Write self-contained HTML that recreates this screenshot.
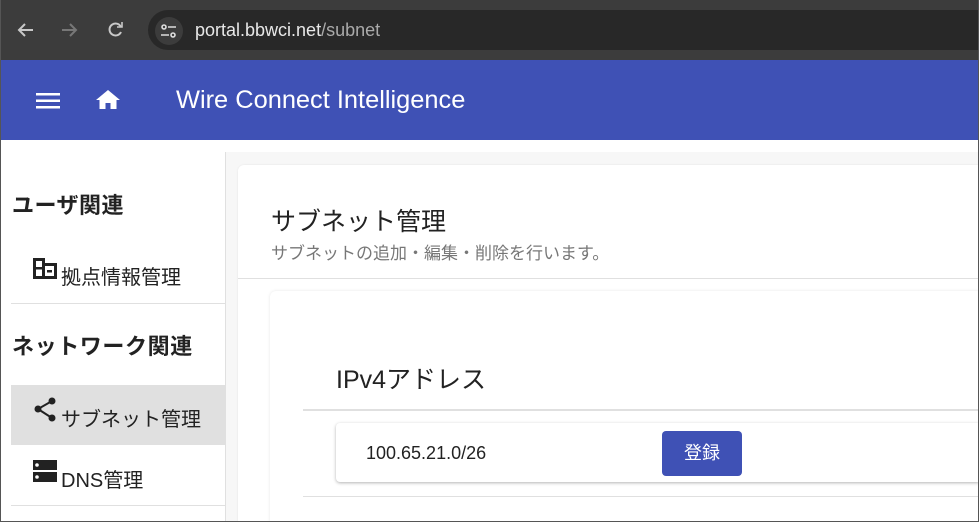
<!DOCTYPE html>
<html style="width:979px;height:522px;overflow:hidden"><head><meta charset="utf-8"><style>
*{margin:0;padding:0;box-sizing:border-box}
body{width:979px;height:522px;overflow:hidden;font-family:"Liberation Sans","Noto Sans CJK JP",sans-serif;background:#fff;position:relative;color:#222}
.abs{position:absolute}
</style></head><body>
<div class="abs" style="left:0;top:0;width:979px;height:60px;background:#3c3c3c"></div>
<div class="abs" style="left:148px;top:10px;width:831px;height:40px;border-radius:20px 0 0 20px;background:#282828"></div>
<div class="abs" style="left:155px;top:17px;width:28px;height:28px;border-radius:14px;background:#3c3c3c"></div>
<svg class="abs" style="left:0;top:0" width="200" height="60">
<g stroke="#c8c8c8" stroke-width="2" fill="none"><path d="M33 30H19M25 24l-6 6 6 6"/></g>
<g stroke="#777" stroke-width="2" fill="none"><path d="M62 30h14M70 24l6 6-6 6"/></g>
<g stroke="#c8c8c8" stroke-width="2" fill="none"><path d="M121 27a6 6 0 1 0 0 5"/><path d="M122 22v5h-5" stroke-width="1.6"/></g>
<g stroke="#ddd" stroke-width="1.6" fill="none"><circle cx="164" cy="27" r="2"/><path d="M168 27h8M161 35h8"/><circle cx="173" cy="35" r="2"/></g>
</svg>
<div class="abs" style="left:195px;top:20px;font-size:18px;color:#e8e8e8">portal.bbwci.net<span style="color:#aaa">/subnet</span></div>
<div class="abs" style="left:0;top:60px;width:979px;height:80px;background:#3f51b5"></div>
<svg class="abs" style="left:36px;top:90px" width="90" height="22"><g fill="#fff"><rect x="0" y="3" width="24" height="2.5"/><rect x="0" y="9.5" width="24" height="2.5"/><rect x="0" y="16" width="24" height="2.5"/><path d="M72 0l12 10h-3.5v9h-6v-6h-5v6h-6v-9H60z"/></g></svg>
<div class="abs" style="left:176px;top:86px;font-size:25.4px;color:#fff">Wire Connect Intelligence</div>
<div class="abs" style="left:225px;top:152px;width:1px;height:370px;background:#e0e0e0"></div>
<div class="abs" style="left:226px;top:152px;width:753px;height:370px;background:#f7f7f7"></div>
<div class="abs" style="left:12px;top:188px;font-size:22px;font-weight:bold;letter-spacing:0.5px">ユーザ関連</div>
<svg class="abs" style="left:33px;top:258px" width="26" height="22"><g fill="#222"><rect x="0" y="0" width="3" height="21"/><rect x="0" y="0" width="12" height="3"/><rect x="9" y="0" width="3" height="21"/><rect x="0" y="9" width="12" height="2.5"/><rect x="0" y="18" width="24" height="3"/><rect x="12" y="5" width="12" height="3"/><rect x="21" y="5" width="3" height="16"/><rect x="14" y="12" width="5" height="2.5"/></g></svg>
<div class="abs" style="left:61px;top:261px;font-size:20px">拠点情報管理</div>
<div class="abs" style="left:11px;top:303px;width:214px;height:1px;background:#e0e0e0"></div>
<div class="abs" style="left:12px;top:329px;font-size:22px;font-weight:bold;letter-spacing:0.6px">ネットワーク関連</div>
<div class="abs" style="left:11px;top:385px;width:214px;height:60px;background:#e0e0e0"></div>
<svg class="abs" style="left:33px;top:397px" width="26" height="26"><g fill="#222"><circle cx="19" cy="4" r="3.5"/><circle cx="5" cy="12" r="3.5"/><circle cx="19" cy="21" r="3.5"/></g><path d="M19 4L5 12l14 9" stroke="#222" stroke-width="2" fill="none"/></svg>
<div class="abs" style="left:61px;top:403px;font-size:20px">サブネット管理</div>
<svg class="abs" style="left:33px;top:460px" width="24" height="24"><rect x="0" y="0" width="24" height="10" fill="#222"/><rect x="0" y="12" width="24" height="10" fill="#222"/><circle cx="4" cy="5" r="1.8" fill="#fff"/><circle cx="4" cy="17" r="1.8" fill="#fff"/></svg>
<div class="abs" style="left:61px;top:464px;font-size:20px">DNS管理</div>
<div class="abs" style="left:11px;top:505px;width:214px;height:1px;background:#e0e0e0"></div>
<div class="abs" style="left:238px;top:165px;width:741px;height:357px;background:#fff;border-radius:6px 0 0 0;box-shadow:0 0 2px rgba(0,0,0,.08)"></div>
<div class="abs" style="left:271px;top:202px;font-size:25px">サブネット管理</div>
<div class="abs" style="left:271px;top:239px;font-size:17px;color:#777">サブネットの追加・編集・削除を行います。</div>
<div class="abs" style="left:238px;top:278px;width:741px;height:1px;background:#e0e0e0"></div>
<div class="abs" style="left:270px;top:291px;width:709px;height:231px;background:#fff;border-radius:6px 0 0 0;box-shadow:0 0 3px rgba(0,0,0,.1)"></div>
<div class="abs" style="left:336px;top:360px;font-size:25px">IPv4アドレス</div>
<div class="abs" style="left:303px;top:409px;width:676px;height:2px;background:#e0e0e0"></div>
<div class="abs" style="left:336px;top:423px;width:643px;height:59px;background:#fff;border-radius:4px 0 0 4px;box-shadow:0 1px 3px rgba(0,0,0,.3)"></div>
<div class="abs" style="left:366px;top:443px;font-size:18px">100.65.21.0/26</div>
<div class="abs" style="left:662px;top:431px;width:80px;height:45px;background:#3f51b5;border-radius:4px;color:#fff;font-size:18px;text-align:center;line-height:45px">登録</div>
<div class="abs" style="left:303px;top:496px;width:676px;height:1px;background:#e0e0e0"></div>
<div class="abs" style="left:0;top:0;width:979px;height:522px;border:1px solid #555;border-top:none;pointer-events:none"></div>
</body></html>
